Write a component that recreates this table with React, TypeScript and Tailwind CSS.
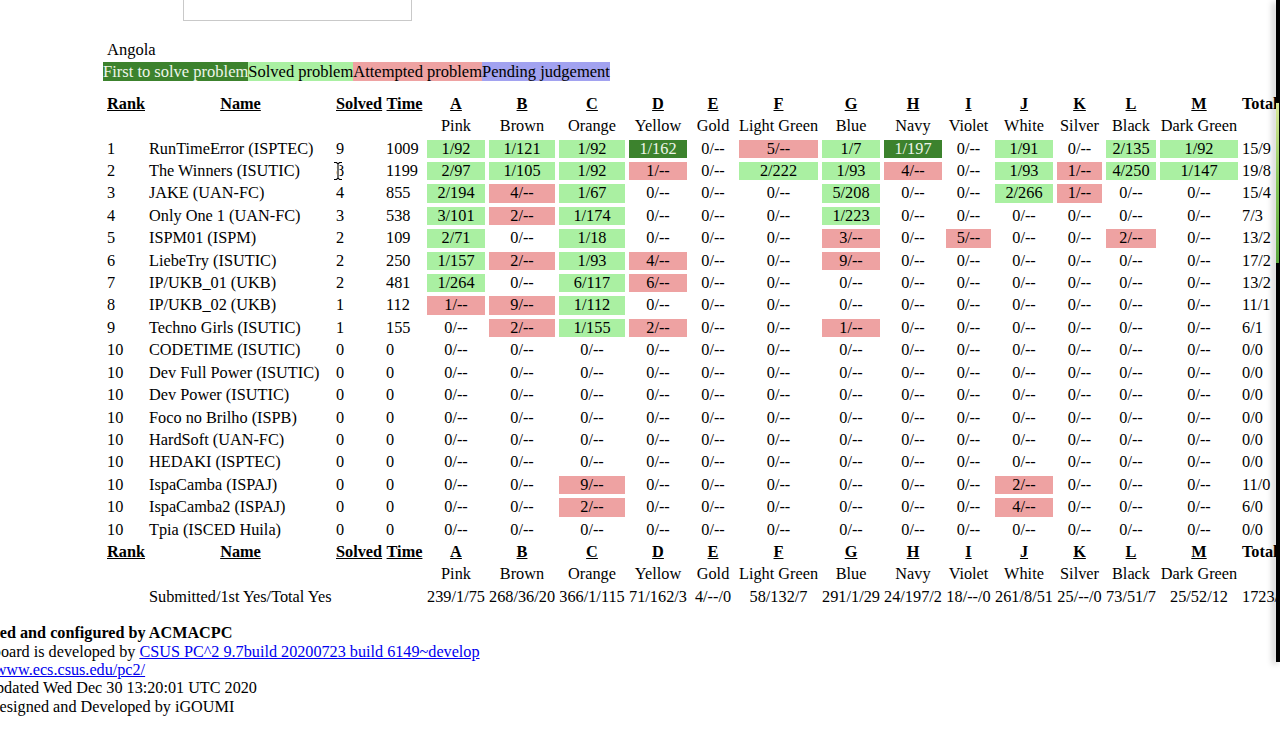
import React from 'react';

type Mark = 'f' | 's' | 'x' | '';

const problems = [
  ['A', 'Pink'],
  ['B', 'Brown'],
  ['C', 'Orange'],
  ['D', 'Yellow'],
  ['E', 'Gold'],
  ['F', 'Light Green'],
  ['G', 'Blue'],
  ['H', 'Navy'],
  ['I', 'Violet'],
  ['J', 'White'],
  ['K', 'Silver'],
  ['L', 'Black'],
  ['M', 'Dark Green'],
];

const colWidths = [
  'w-[38px]', 'w-[183px]', 'w-[46px]', 'w-[37px]',
  'w-[58px]', 'w-[66px]', 'w-[66px]', 'w-[58px]', 'w-[44px]', 'w-[79px]', 'w-[58px]',
  'w-[58px]', 'w-[45px]', 'w-[58px]', 'w-[45px]', 'w-[50px]', 'w-[78px]', 'w-[70px]',
];

const markClass: Record<Mark, string> = {
  f: 'bg-[#3c822d] text-[#eef6ea]',
  s: 'bg-[#aaf0a2]',
  x: 'bg-[#eea2a2]',
  '': '',
};

const empty = '0/-- 0/-- 0/-- 0/-- 0/-- 0/-- 0/-- 0/-- 0/-- 0/-- 0/-- 0/-- 0/--';

const teams = [
  ['1', 'RunTimeError (ISPTEC)', '9', '1009', 's1/92 s1/121 s1/92 f1/162 0/-- x5/-- s1/7 f1/197 0/-- s1/91 0/-- s2/135 s1/92', '15/9'],
  ['2', 'The Winners (ISUTIC)', '8', '1199', 's2/97 s1/105 s1/92 x1/-- 0/-- s2/222 s1/93 x4/-- 0/-- s1/93 x1/-- s4/250 s1/147', '19/8'],
  ['3', 'JAKE (UAN-FC)', '4', '855', 's2/194 x4/-- s1/67 0/-- 0/-- 0/-- s5/208 0/-- 0/-- s2/266 x1/-- 0/-- 0/--', '15/4'],
  ['4', 'Only One 1 (UAN-FC)', '3', '538', 's3/101 x2/-- s1/174 0/-- 0/-- 0/-- s1/223 0/-- 0/-- 0/-- 0/-- 0/-- 0/--', '7/3'],
  ['5', 'ISPM01 (ISPM)', '2', '109', 's2/71 0/-- s1/18 0/-- 0/-- 0/-- x3/-- 0/-- x5/-- 0/-- 0/-- x2/-- 0/--', '13/2'],
  ['6', 'LiebeTry (ISUTIC)', '2', '250', 's1/157 x2/-- s1/93 x4/-- 0/-- 0/-- x9/-- 0/-- 0/-- 0/-- 0/-- 0/-- 0/--', '17/2'],
  ['7', 'IP/UKB_01 (UKB)', '2', '481', 's1/264 0/-- s6/117 x6/-- 0/-- 0/-- 0/-- 0/-- 0/-- 0/-- 0/-- 0/-- 0/--', '13/2'],
  ['8', 'IP/UKB_02 (UKB)', '1', '112', 'x1/-- x9/-- s1/112 0/-- 0/-- 0/-- 0/-- 0/-- 0/-- 0/-- 0/-- 0/-- 0/--', '11/1'],
  ['9', 'Techno Girls (ISUTIC)', '1', '155', '0/-- x2/-- s1/155 x2/-- 0/-- 0/-- x1/-- 0/-- 0/-- 0/-- 0/-- 0/-- 0/--', '6/1'],
  ['10', 'CODETIME (ISUTIC)', '0', '0', empty, '0/0'],
  ['10', 'Dev Full Power (ISUTIC)', '0', '0', empty, '0/0'],
  ['10', 'Dev Power (ISUTIC)', '0', '0', empty, '0/0'],
  ['10', 'Foco no Brilho (ISPB)', '0', '0', empty, '0/0'],
  ['10', 'HardSoft (UAN-FC)', '0', '0', empty, '0/0'],
  ['10', 'HEDAKI (ISPTEC)', '0', '0', empty, '0/0'],
  ['10', 'IspaCamba (ISPAJ)', '0', '0', '0/-- 0/-- x9/-- 0/-- 0/-- 0/-- 0/-- 0/-- 0/-- x2/-- 0/-- 0/-- 0/--', '11/0'],
  ['10', 'IspaCamba2 (ISPAJ)', '0', '0', '0/-- 0/-- x2/-- 0/-- 0/-- 0/-- 0/-- 0/-- 0/-- x4/-- 0/-- 0/-- 0/--', '6/0'],
  ['10', 'Tpia (ISCED Huila)', '0', '0', empty, '0/0'],
];

const summary = ['239/1/75', '268/36/20', '366/1/115', '71/162/3', '4/--/0', '58/132/7', '291/1/29', '24/197/2', '18/--/0', '261/8/51', '25/--/0', '73/51/7', '25/52/12'];

function parse(cell: string): [Mark, string] {
  const m = cell[0];
  if (m === 'f' || m === 's' || m === 'x') return [m, cell.slice(1)];
  return ['', cell];
}

function HeaderRows() {
  return (
    <>
      <tr>
        <th className="text-center font-bold"><a className="underline">Rank</a></th>
        <th className="text-center font-bold"><a className="underline">Name</a></th>
        <th className="text-center font-bold"><a className="underline">Solved</a></th>
        <th className="text-center font-bold"><a className="underline">Time</a></th>
        {problems.map(([letter]) => (
          <th key={letter} className="text-center font-bold"><a className="underline">{letter}</a></th>
        ))}
        <th className="text-left font-bold">Total</th>
      </tr>
      <tr>
        <td></td>
        <td></td>
        <td></td>
        <td></td>
        {problems.map(([letter, color]) => (
          <td key={letter} className="whitespace-nowrap text-center">{color}</td>
        ))}
        <td></td>
      </tr>
    </>
  );
}

function Scoreboard() {
  return (
    <table className="w-[1213px] table-fixed border-separate border-spacing-[4px] text-[16.3px]">
      <colgroup>
        {colWidths.map((w, i) => (
          <col key={i} className={w} />
        ))}
      </colgroup>
      <tbody>
        <HeaderRows />
        {teams.map(([rank, name, solved, time, cells, total]) => (
          <tr key={name}>
            <td>{rank}</td>
            <td className="whitespace-nowrap">{name}</td>
            <td>{solved}</td>
            <td>{time}</td>
            {cells.split(' ').map((c, i) => {
              const [mark, text] = parse(c);
              return (
                <td key={i} className={`text-center ${markClass[mark]}`}>{text}</td>
              );
            })}
            <td>{total}</td>
          </tr>
        ))}
        <HeaderRows />
        <tr>
          <td></td>
          <td className="whitespace-nowrap">Submitted/1st Yes/Total Yes</td>
          <td></td>
          <td></td>
          {summary.map((s, i) => (
            <td key={i} className="whitespace-nowrap text-center">{s}</td>
          ))}
          <td className="whitespace-nowrap">1723/1/321</td>
        </tr>
      </tbody>
    </table>
  );
}

export default function App() {
  return (
    <div className="relative h-[753px] w-[1280px] overflow-hidden bg-white font-['Liberation_Serif','Times_New_Roman',serif] text-[16.5px] leading-[18.4px] text-black">
      <div className="ml-[183px] h-[21px] w-[229px] border-x border-b border-[#c9c9c9]" />

      <div className="ml-[103px] mt-[20px]">
        <div className="pl-[4px]">Angola</div>
        <div className="mt-[4px] whitespace-nowrap">
          <span className="bg-[#3c822d] text-[#eef6ea]">First to solve problem</span>
          <span className="bg-[#aaf0a2]">Solved problem</span>
          <span className="bg-[#eea2a2]">Attempted problem</span>
          <span className="bg-[#a2a2f0]">Pending judgement</span>
        </div>
        <div className="mt-[9px]">
          <Scoreboard />
        </div>
      </div>

      <div className="-ml-[44px] mt-[14px] whitespace-nowrap text-[16.2px]">
        <div className="font-bold">Powered and configured by ACMACPC</div>
        <div>
          Scoreboard is developed by <a className="text-[#0000ee] underline">CSUS PC^2 9.7build 20200723 build 6149~develop</a>
        </div>
        <div>
          <a className="text-[#0000ee] underline">http://www.ecs.csus.edu/pc2/</a>
        </div>
        <div>Last updated Wed Dec 30 13:20:01 UTC 2020</div>
        <div>Page designed and Developed by iGOUMI</div>
      </div>

      {/* mouse cursor over the table */}
      <svg className="absolute left-[333px] top-[161px]" width="10" height="20" viewBox="0 0 10 20">
        <path d="M1 1.5h2.5L5 3l1.5-1.5H9M5 3v14M1 18.5h2.5L5 17l1.5 1.5H9" fill="none" stroke="white" strokeWidth="3" />
        <path d="M1 1.5h2.5L5 3l1.5-1.5H9M5 3v14M1 18.5h2.5L5 17l1.5 1.5H9" fill="none" stroke="black" strokeWidth="1.1" />
      </svg>

      {/* edge of the neighbouring window */}
      <div className="absolute right-0 top-0 h-[662px] w-[4px] bg-black shadow-[-3px_2px_6px_rgba(0,0,0,0.25)]">
        <div className="mt-[103px] h-[160px] w-[3px] bg-gradient-to-b from-[#dbe89a] via-[#86c65a] to-[#5aa63e]" />
      </div>
    </div>
  );
}
